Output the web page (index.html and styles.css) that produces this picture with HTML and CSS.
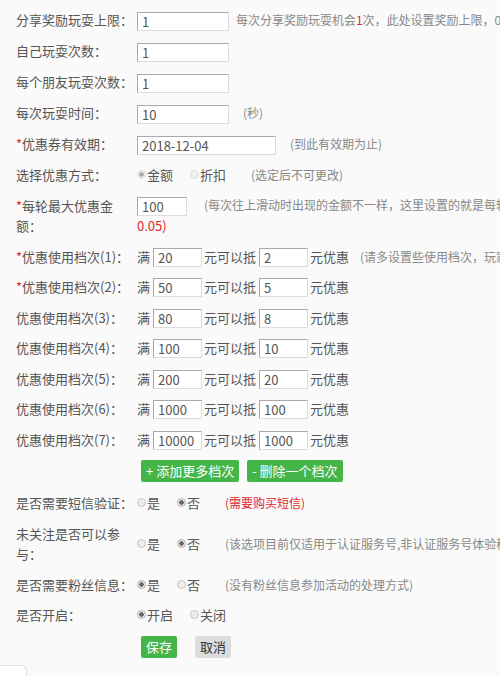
FILE: index.html
```html
<!DOCTYPE html>
<html lang="zh-CN">
<head>
  <meta charset="UTF-8" />
  <meta name="viewport" content="width=device-width, initial-scale=1" />
  <title>活动设置</title>
  <link rel="stylesheet" href="styles.css">
</head>
<body>
  <form class="setting-form">
    <div class="form-row">
      <label class="form-label">分享奖励玩耍上限：</label>
      <div class="form-field">
        <input class="txt txt-md" type="text" value="1" />
        <span class="tip tip-near">每次分享奖励玩耍机会<span class="red">1</span>次，此处设置奖励上限，0表示不限制</span>
      </div>
    </div>
    <div class="form-row">
      <label class="form-label">自己玩耍次数：</label>
      <div class="form-field"><input class="txt txt-md" type="text" value="1" /></div>
    </div>
    <div class="form-row">
      <label class="form-label">每个朋友玩耍次数：</label>
      <div class="form-field"><input class="txt txt-md" type="text" value="1" /></div>
    </div>
    <div class="form-row">
      <label class="form-label">每次玩耍时间：</label>
      <div class="form-field">
        <input class="txt txt-md" type="text" value="10" />
        <span class="tip">(秒)</span>
      </div>
    </div>
    <div class="form-row">
      <label class="form-label"><span class="red">*</span>优惠券有效期：</label>
      <div class="form-field">
        <input class="txt txt-lg" type="text" value="2018-12-04" />
        <span class="tip">(到此有效期为止)</span>
      </div>
    </div>
    <div class="form-row">
      <label class="form-label">选择优惠方式：</label>
      <div class="form-field">
        <label class="radio"><input type="radio" name="type" checked disabled />金额</label>
        <label class="radio"><input type="radio" name="type" disabled />折扣</label>
        <span class="tip">(选定后不可更改)</span>
      </div>
    </div>
    <div class="form-row">
      <label class="form-label"><span class="red">*</span>每轮最大优惠金额：</label>
      <div class="form-field">
        <input class="txt txt-sm" type="text" value="100" />
        <span class="tip tip-wide">(每次往上滑动时出现的金额不一样，这里设置的就是每轮最大的优惠金额，最小为</span><br />
        <span class="red">0.05)</span>
      </div>
    </div>

    <div class="form-row">
      <label class="form-label"><span class="red">*</span>优惠使用档次(1)：</label>
      <div class="form-field tier">
        <span>满</span><input class="txt txt-sm" type="text" value="20" /><span>元可以抵</span><input class="txt txt-sm" type="text" value="2" /><span>元优惠</span><span class="tip tip-wide">(请多设置些使用档次，玩家可以根据金额使用优惠券)</span>
      </div>
    </div>
    <div class="form-row">
      <label class="form-label"><span class="red">*</span>优惠使用档次(2)：</label>
      <div class="form-field tier"><span>满</span><input class="txt txt-sm" type="text" value="50" /><span>元可以抵</span><input class="txt txt-sm" type="text" value="5" /><span>元优惠</span></div>
    </div>
    <div class="form-row">
      <label class="form-label">优惠使用档次(3)：</label>
      <div class="form-field tier"><span>满</span><input class="txt txt-sm" type="text" value="80" /><span>元可以抵</span><input class="txt txt-sm" type="text" value="8" /><span>元优惠</span></div>
    </div>
    <div class="form-row">
      <label class="form-label">优惠使用档次(4)：</label>
      <div class="form-field tier"><span>满</span><input class="txt txt-sm" type="text" value="100" /><span>元可以抵</span><input class="txt txt-sm" type="text" value="10" /><span>元优惠</span></div>
    </div>
    <div class="form-row">
      <label class="form-label">优惠使用档次(5)：</label>
      <div class="form-field tier"><span>满</span><input class="txt txt-sm" type="text" value="200" /><span>元可以抵</span><input class="txt txt-sm" type="text" value="20" /><span>元优惠</span></div>
    </div>
    <div class="form-row">
      <label class="form-label">优惠使用档次(6)：</label>
      <div class="form-field tier"><span>满</span><input class="txt txt-sm" type="text" value="1000" /><span>元可以抵</span><input class="txt txt-sm" type="text" value="100" /><span>元优惠</span></div>
    </div>
    <div class="form-row">
      <label class="form-label">优惠使用档次(7)：</label>
      <div class="form-field tier"><span>满</span><input class="txt txt-sm" type="text" value="10000" /><span>元可以抵</span><input class="txt txt-sm" type="text" value="1000" /><span>元优惠</span></div>
    </div>

    <div class="form-row btn-row">
      <span class="form-label"></span>
      <div class="form-field">
        <button type="button" class="btn btn-green">+ 添加更多档次</button>
        <button type="button" class="btn btn-green">- 删除一个档次</button>
      </div>
    </div>

    <div class="form-row">
      <label class="form-label">是否需要短信验证：</label>
      <div class="form-field">
        <label class="radio"><input type="radio" name="sms" />是</label>
        <label class="radio"><input type="radio" name="sms" checked />否</label>
        <span class="tip red">(需要购买短信)</span>
      </div>
    </div>
    <div class="form-row">
      <label class="form-label">未关注是否可以参与：</label>
      <div class="form-field">
        <label class="radio"><input type="radio" name="follow" />是</label>
        <label class="radio"><input type="radio" name="follow" checked />否</label>
        <span class="tip">(该选项目前仅适用于认证服务号,非认证服务号体验稍差)</span>
      </div>
    </div>
    <div class="form-row">
      <label class="form-label">是否需要粉丝信息：</label>
      <div class="form-field">
        <label class="radio"><input type="radio" name="fans" checked />是</label>
        <label class="radio"><input type="radio" name="fans" />否</label>
        <span class="tip">(没有粉丝信息参加活动的处理方式)</span>
      </div>
    </div>
    <div class="form-row">
      <label class="form-label">是否开启：</label>
      <div class="form-field">
        <label class="radio"><input type="radio" name="open" checked />开启</label>
        <label class="radio"><input type="radio" name="open" />关闭</label>
      </div>
    </div>

    <div class="form-row btn-row">
      <span class="form-label"></span>
      <div class="form-field">
        <button type="button" class="btn btn-green">保存</button>
        <button type="button" class="btn btn-gray">取消</button>
      </div>
    </div>
  </form>
  <div class="bottom-tab"></div>
</body>
</html>
```

FILE: styles.css
```css
* { box-sizing: border-box; }
html, body { overflow: hidden; }
body {
  margin: 0;
  background: #fafafa;
  font-family: "Noto Sans CJK SC", "Noto Sans", sans-serif;
  font-size: 13px;
  color: #555;
}
.red { color: #e0262f; }

.setting-form {
  padding: 5px 0 0 16px;
}
.form-row {
  display: flex;
  align-items: center;
  padding: 5px 0;
  line-height: 20.5px;
}
.form-label {
  width: 121px;
  flex-shrink: 0;
  white-space: normal;
}
.form-field {
  white-space: nowrap;
}
.form-field.tier {
  display: flex;
  align-items: center;
}

.txt {
  height: 19px;
  margin: 0 3px;
  padding: 0 4px;
  border: 1px solid;
  border-color: #a9a9a9 #dcdcdc #dcdcdc #a9a9a9;
  background: #fff;
  font-family: inherit;
  font-size: 13px;
  color: #555;
  vertical-align: middle;
  outline: none;
}
.form-field > .txt:first-child { margin-left: 0; }
.txt-md { width: 92px; }
.txt-lg { width: 139px; }
.txt-sm { width: 50px; }
.tier .txt {
  width: 49px;
  margin: 0 2px 0 3px;
}

.tip {
  margin-left: 8px;
  font-size: 12px;
  color: #888;
}
.tip.red { color: #e0262f; }
.tip-near { margin-left: 1px; }
.tip-wide { margin-left: 11px; }

.radio {
  display: inline-block;
  margin-right: 14px;
}
.radio input {
  appearance: none;
  -webkit-appearance: none;
  width: 9px;
  height: 9px;
  margin: 0 1px 0 0;
  border: 1px solid #c4c4c4;
  border-radius: 50%;
  background: #ececec;
  vertical-align: 1px;
}
.radio input:checked {
  background: radial-gradient(circle, #666 0 2px, #ececec 2.5px);
  border-color: #b0b0b0;
}
.radio input:disabled {
  border-color: #ddd;
  background: #f0f0f0;
}
.radio input:disabled:checked {
  background: radial-gradient(circle, #aaa 0 2px, #eee 2.5px);
}

.btn-row {
  padding: 5px 0 6px;
}
.btn-row .form-field {
  display: flex;
  gap: 8px;
  margin-left: 4px;
}
.btn {
  height: 22px;
  padding: 0 5px;
  border: none;
  border-radius: 2px;
  font-family: inherit;
  font-size: 13px;
  line-height: 22px;
}
.btn-green {
  background: #44b549;
  color: #fff;
}
.btn-gray {
  margin-left: 10px;
  background: #dcdcdc;
  color: #333;
}

.bottom-tab {
  width: 27px;
  height: 12px;
  margin-top: 1px;
  border: 1px solid #ddd;
  border-left: none;
  border-bottom: none;
  border-radius: 0 6px 0 0;
  background: #fff;
}
```
